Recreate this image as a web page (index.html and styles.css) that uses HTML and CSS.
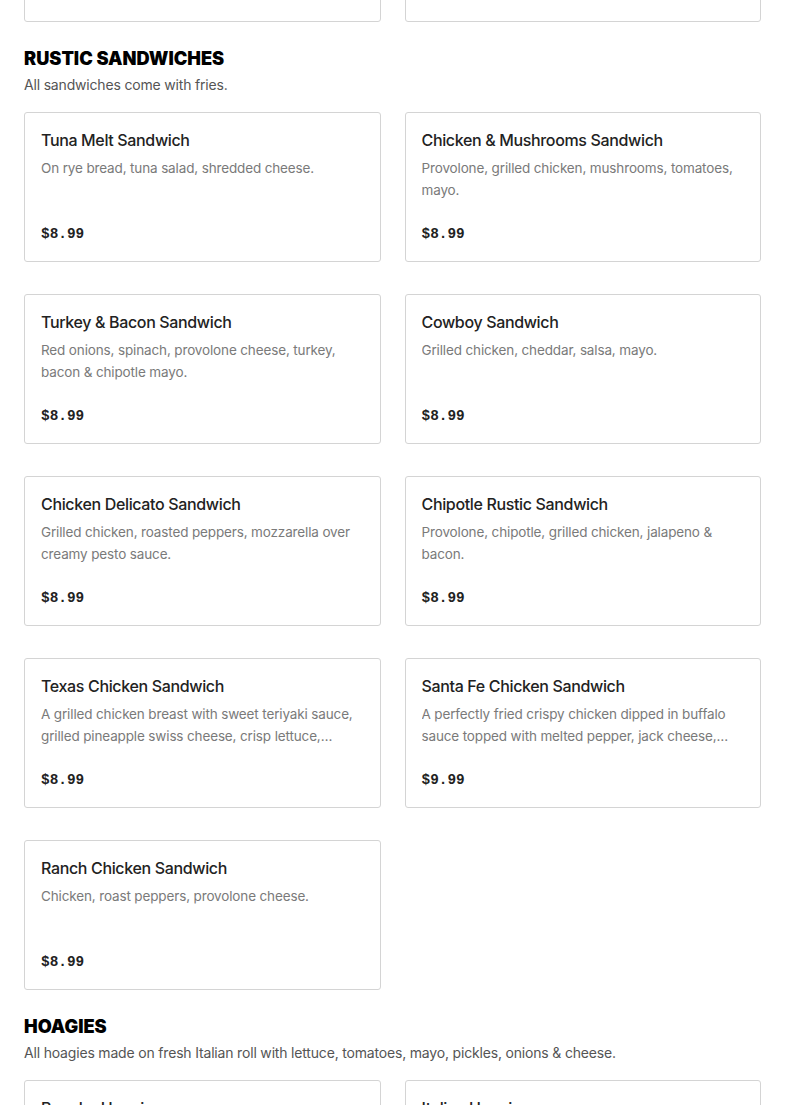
FILE: index.html
```html
<!DOCTYPE html>
<html lang="en">
<head>
<meta charset="utf-8">
<title>Menu</title>
<link rel="stylesheet" href="styles.css">
</head>
<body>
<main class="page">
  <section class="section">
    <div class="grid">
      <article class="card">
        <h3 class="card-title">Sandwich</h3>
        <p class="card-desc">Description.</p>
        <div class="card-price">$8.99</div>
      </article>
      <article class="card">
        <h3 class="card-title">Sandwich</h3>
        <p class="card-desc">Description.</p>
        <div class="card-price">$8.99</div>
      </article>
    </div>
  </section>

  <section class="section">
    <h2 class="section-title">RUSTIC SANDWICHES</h2>
    <p class="section-desc">All sandwiches come with fries.</p>
    <div class="grid">
      <article class="card">
        <h3 class="card-title">Tuna Melt Sandwich</h3>
        <p class="card-desc">On rye bread, tuna salad, shredded cheese.</p>
        <div class="card-price">$8.99</div>
      </article>
      <article class="card">
        <h3 class="card-title">Chicken &amp; Mushrooms Sandwich</h3>
        <p class="card-desc">Provolone, grilled chicken, mushrooms, tomatoes, mayo.</p>
        <div class="card-price">$8.99</div>
      </article>
      <article class="card">
        <h3 class="card-title">Turkey &amp; Bacon Sandwich</h3>
        <p class="card-desc">Red onions, spinach, provolone cheese, turkey, bacon &amp; chipotle mayo.</p>
        <div class="card-price">$8.99</div>
      </article>
      <article class="card">
        <h3 class="card-title">Cowboy Sandwich</h3>
        <p class="card-desc">Grilled chicken, cheddar, salsa, mayo.</p>
        <div class="card-price">$8.99</div>
      </article>
      <article class="card">
        <h3 class="card-title">Chicken Delicato Sandwich</h3>
        <p class="card-desc">Grilled chicken, roasted peppers, mozzarella over creamy pesto sauce.</p>
        <div class="card-price">$8.99</div>
      </article>
      <article class="card">
        <h3 class="card-title">Chipotle Rustic Sandwich</h3>
        <p class="card-desc">Provolone, chipotle, grilled chicken, jalapeno &amp; bacon.</p>
        <div class="card-price">$8.99</div>
      </article>
      <article class="card">
        <h3 class="card-title">Texas Chicken Sandwich</h3>
        <p class="card-desc">A grilled chicken breast with sweet teriyaki sauce, grilled pineapple swiss cheese, crisp lettuce, tomatoes and mayo on a toasted bun.</p>
        <div class="card-price">$8.99</div>
      </article>
      <article class="card">
        <h3 class="card-title">Santa Fe Chicken Sandwich</h3>
        <p class="card-desc">A perfectly fried crispy chicken dipped in buffalo sauce topped with melted pepper, jack cheese, lettuce and tomatoes.</p>
        <div class="card-price">$9.99</div>
      </article>
      <article class="card">
        <h3 class="card-title">Ranch Chicken Sandwich</h3>
        <p class="card-desc">Chicken, roast peppers, provolone cheese.</p>
        <div class="card-price">$8.99</div>
      </article>
    </div>
  </section>

  <section class="section">
    <h2 class="section-title">HOAGIES</h2>
    <p class="section-desc">All hoagies made on fresh Italian roll with lettuce, tomatoes, mayo, pickles, onions &amp; cheese.</p>
    <div class="grid">
      <article class="card">
        <h3 class="card-title">Regular Hoagie</h3>
        <p class="card-desc">Ham, salami, provolone.</p>
        <div class="card-price">$8.99</div>
      </article>
      <article class="card">
        <h3 class="card-title">Italian Hoagie</h3>
        <p class="card-desc">Ham, salami, capicola, provolone.</p>
        <div class="card-price">$8.99</div>
      </article>
    </div>
  </section>
</main>
</body>
</html>
```
FILE: styles.css
```css
* { box-sizing: border-box; }
html, body { margin: 0; padding: 0; background: #fff; }
body {
  font-family: Inter, "Liberation Sans", Arial, sans-serif;
  color: #222;
  overflow: hidden;
}
.page {
  padding: 0 24px;
  margin-top: -128px;
  display: flex;
  flex-direction: column;
  gap: 24px;
}
.section {
  display: flex;
  flex-direction: column;
}
.section-title {
  margin: 0;
  font-size: 18.2px;
  line-height: 24px;
  font-weight: 900;
  color: #000;
  letter-spacing: 0;
}
.section-desc {
  margin: 5px 0 17px;
  font-size: 14px;
  line-height: 20px;
  color: #555;
  letter-spacing: -0.18px;
}
.grid {
  display: grid;
  grid-template-columns: 1fr 1fr;
  column-gap: 24px;
  row-gap: 32px;
}
.card {
  height: 150px;
  border: 1px solid #d4d4d4;
  border-radius: 3px;
  padding: 16px;
  display: flex;
  flex-direction: column;
}
.card-title {
  margin: 0;
  font-size: 16px;
  line-height: 22px;
  font-weight: 500;
  color: #222;
  letter-spacing: -0.35px;
}
.card-desc {
  margin: 6px 0 0;
  font-size: 13.5px;
  line-height: 22px;
  color: #7a7a7a;
  letter-spacing: -0.14px;
  display: -webkit-box;
  -webkit-line-clamp: 2;
  -webkit-box-orient: vertical;
  overflow: hidden;
}
.card-price {
  margin-top: auto;
  font-family: "Liberation Mono", "DejaVu Sans Mono", monospace;
  font-weight: 700;
  font-size: 14.4px;
  line-height: 22px;
  color: #222;
}
```
